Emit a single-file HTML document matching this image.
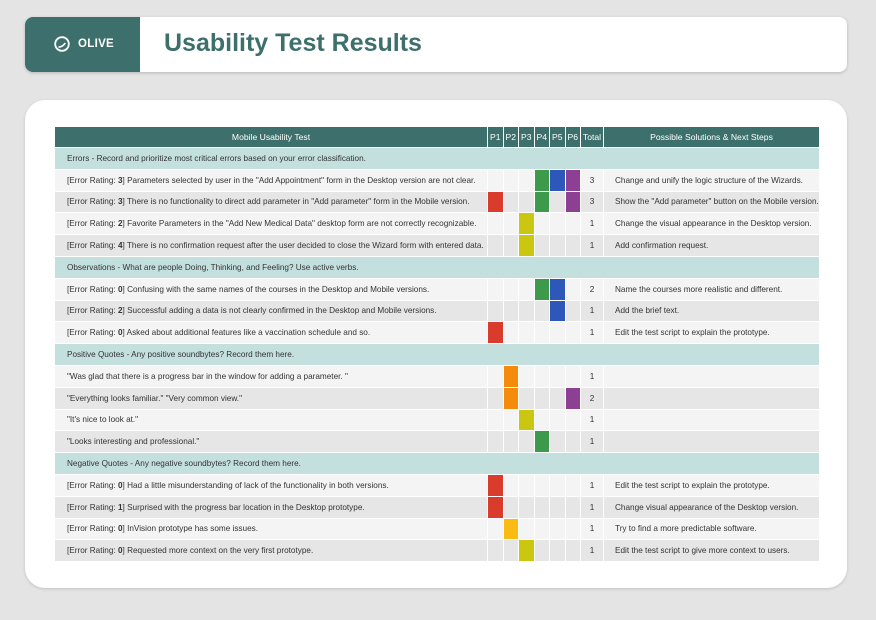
<!DOCTYPE html>
<html><head><meta charset="utf-8"><style>
body{margin:0;width:876px;height:620px;background:#e4e4e4;font-family:"Liberation Sans",sans-serif;position:relative;overflow:hidden}
.hdr{position:absolute;left:25px;top:17px;width:822px;height:55px;background:#fff;border-radius:8px;box-shadow:0 1px 3px rgba(0,0,0,.2);overflow:hidden}
.logo{position:absolute;left:0;top:0;width:115px;height:55px;background:#3d706c;color:#fff;font-weight:bold;font-size:11.5px;letter-spacing:.3px}
.logo svg{position:absolute;left:29px;top:19px}
.logo span{position:absolute;left:53px;top:21px}
.title{position:absolute;left:139px;top:12px;font-size:25px;font-weight:bold;color:#3d706c}
.card{position:absolute;left:25px;top:100px;width:822px;height:488px;background:#fff;border-radius:20px;box-shadow:0 1px 3px rgba(0,0,0,.15)}
table{position:absolute;left:54px;top:126px;border-collapse:separate;border-spacing:1px;table-layout:fixed;font-size:8.2px;color:#333}
td{height:20.8px;padding:0;background:#f4f4f4;white-space:nowrap;overflow:hidden}
tr.a td{background:#e6e6e6}
tr.h td{background:#3d706c;color:#fff;text-align:center;height:20px;font-size:8.6px}
tr.s td{background:#c4e0de;padding-left:12px}
td.t{padding-left:12px}
td.n{text-align:center}
td.sol{padding-left:11px}
.R{background:#d93b2c!important}.O{background:#f58a0b!important}.Y{background:#cbc60f!important}.G{background:#3e9a4b!important}.B{background:#2d57b9!important}.P{background:#8d3f94!important}.A{background:#fbbb12!important}
</style></head><body>
<div class="hdr"><div class="logo"><svg width="16" height="16" viewBox="0 0 16 16"><circle cx="8" cy="8" r="6.8" fill="none" stroke="#fff" stroke-width="1.8"/><path d="M4.5 10.8 Q8 11.5 11.3 7" fill="none" stroke="#fff" stroke-width="1.6"/></svg><span>OLIVE</span></div><div class="title">Usability Test Results</div></div>
<div class="card"></div>
<table>
<colgroup><col style="width:432px"><col style="width:14.5px"><col style="width:14.5px"><col style="width:14.5px"><col style="width:14.5px"><col style="width:14.5px"><col style="width:14.5px"><col style="width:22px"><col style="width:215px"></colgroup>
<tr class="h"><td>Mobile Usability Test</td><td>P1</td><td>P2</td><td>P3</td><td>P4</td><td>P5</td><td>P6</td><td>Total</td><td>Possible Solutions &amp; Next Steps</td></tr>
<tr class="s"><td colspan="9">Errors - Record and prioritize most critical errors based on your error classification.</td></tr>
<tr><td class="t">[Error Rating: <b>3</b>] Parameters selected by user in the "Add Appointment" form in the Desktop version are not clear.</td><td></td><td></td><td></td><td class="G"></td><td class="B"></td><td class="P"></td><td class="n">3</td><td class="sol">Change and unify the logic structure of the Wizards.</td></tr>
<tr class="a"><td class="t">[Error Rating: <b>3</b>] There is no functionality to direct add parameter in "Add parameter" form in the Mobile version.</td><td class="R"></td><td></td><td></td><td class="G"></td><td></td><td class="P"></td><td class="n">3</td><td class="sol">Show the "Add parameter" button on the Mobile version.</td></tr>
<tr><td class="t">[Error Rating: <b>2</b>] Favorite Parameters in the "Add New Medical Data" desktop form are not correctly recognizable.</td><td></td><td></td><td class="Y"></td><td></td><td></td><td></td><td class="n">1</td><td class="sol">Change the visual appearance in the Desktop version.</td></tr>
<tr class="a"><td class="t">[Error Rating: <b>4</b>] There is no confirmation request after the user decided to close the Wizard form with entered data.</td><td></td><td></td><td class="Y"></td><td></td><td></td><td></td><td class="n">1</td><td class="sol">Add confirmation request.</td></tr>
<tr class="s"><td colspan="9">Observations - What are people Doing, Thinking, and Feeling? Use active verbs.</td></tr>
<tr><td class="t">[Error Rating: <b>0</b>] Confusing with the same names of the courses in the Desktop and Mobile versions.</td><td></td><td></td><td></td><td class="G"></td><td class="B"></td><td></td><td class="n">2</td><td class="sol">Name the courses more realistic and different.</td></tr>
<tr class="a"><td class="t">[Error Rating: <b>2</b>] Successful adding a data is not clearly confirmed in the Desktop and Mobile versions.</td><td></td><td></td><td></td><td></td><td class="B"></td><td></td><td class="n">1</td><td class="sol">Add the brief text.</td></tr>
<tr><td class="t">[Error Rating: <b>0</b>] Asked about additional features like a vaccination schedule and so.</td><td class="R"></td><td></td><td></td><td></td><td></td><td></td><td class="n">1</td><td class="sol">Edit the test script to explain the prototype.</td></tr>
<tr class="s"><td colspan="9">Positive Quotes - Any positive soundbytes? Record them here.</td></tr>
<tr><td class="t">"Was glad that there is a progress bar in the window for adding a parameter. "</td><td></td><td class="O"></td><td></td><td></td><td></td><td></td><td class="n">1</td><td class="sol"></td></tr>
<tr class="a"><td class="t">"Everything looks familiar." "Very common view."</td><td></td><td class="O"></td><td></td><td></td><td></td><td class="P"></td><td class="n">2</td><td class="sol"></td></tr>
<tr><td class="t">"It's nice to look at."</td><td></td><td></td><td class="Y"></td><td></td><td></td><td></td><td class="n">1</td><td class="sol"></td></tr>
<tr class="a"><td class="t">"Looks interesting and professional."</td><td></td><td></td><td></td><td class="G"></td><td></td><td></td><td class="n">1</td><td class="sol"></td></tr>
<tr class="s"><td colspan="9">Negative Quotes - Any negative soundbytes? Record them here.</td></tr>
<tr><td class="t">[Error Rating: <b>0</b>] Had a little misunderstanding of lack of the functionality in both versions.</td><td class="R"></td><td></td><td></td><td></td><td></td><td></td><td class="n">1</td><td class="sol">Edit the test script to explain the prototype.</td></tr>
<tr class="a"><td class="t">[Error Rating: <b>1</b>] Surprised with the progress bar location in the Desktop prototype.</td><td class="R"></td><td></td><td></td><td></td><td></td><td></td><td class="n">1</td><td class="sol">Change visual appearance of the Desktop version.</td></tr>
<tr><td class="t">[Error Rating: <b>0</b>] InVision prototype has some issues.</td><td></td><td class="A"></td><td></td><td></td><td></td><td></td><td class="n">1</td><td class="sol">Try to find a more predictable software.</td></tr>
<tr class="a"><td class="t">[Error Rating: <b>0</b>] Requested more context on the very first prototype.</td><td></td><td></td><td class="Y"></td><td></td><td></td><td></td><td class="n">1</td><td class="sol">Edit the test script to give more context to users.</td></tr>
</table>
</body></html>
